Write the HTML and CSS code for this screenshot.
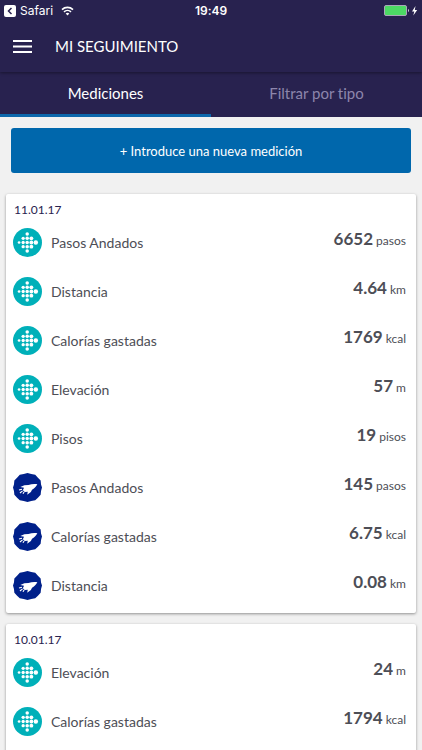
FILE: index.html
```
<!DOCTYPE html>
<html lang="es">
  <head>
    <meta charset="utf-8">
    <meta name="viewport" content="width=device-width, initial-scale=1">
    <title>Mi seguimiento</title>
    <link rel="stylesheet" href="styles.css">
  </head>
  <body>
    <!-- icons shared by the rows -->
    <svg class="hidden">
      <symbol id="fitbit" viewBox="0 0 30 30">
        <circle cx="15" cy="15" r="15" fill="#00b0b9"/>
        <g fill="#fff">
          <circle cx="6.3" cy="15" r="1.4"/>
          <circle cx="10.5" cy="10.7" r="1.7"/>
          <circle cx="10.5" cy="15" r="1.7"/>
          <circle cx="10.5" cy="19.3" r="1.7"/>
          <circle cx="14.7" cy="6.3" r="1.8"/>
          <circle cx="14.7" cy="10.7" r="1.8"/>
          <circle cx="14.7" cy="15" r="1.8"/>
          <circle cx="14.7" cy="19.3" r="1.8"/>
          <circle cx="14.7" cy="23.7" r="1.8"/>
          <circle cx="19" cy="10.7" r="2"/>
          <circle cx="19" cy="15" r="2"/>
          <circle cx="19" cy="19.3" r="2"/>
          <circle cx="23.6" cy="15" r="2.3"/>
        </g>
      </symbol>
      <symbol id="rocket" viewBox="0 0 30 30">
        <path fill="#00208a" d="M15 0l3.900 1.100 4.100.6 2.800 3.100 2.800 3 .4 4L30 15l-1 3.500-.4 4-2.800 3-2.800 2.800-4.100.6L15 30l-3.900-1.100-4.100-.6-2.800-2.800-2.800-3-.4-4L0 15l1-3.200.4-4 2.800-3L7 1.700l4.100-.6z"/>
        <path fill="#fff" d="M25.200 11.600c-3.200-.5-6.300-.2-9.200.9l-4.200.2-4.200 1.700 3.800.9-1.200 2.600 1.900 1.700 3.200-.3-.6 3.100 3.800-2.800 1.200-2.200c2.200-1.500 4.100-3.400 5.500-5.800z"/>
        <path d="M9.300 16.800l-3.100.8M9.900 18.500l-2.700 2.200M11.500 19.700l-1.200 1.800" stroke="#fff" stroke-width="1.200"/>
      </symbol>
    </svg>

    <div class="header">
      <div class="status-bar">
        <div class="status-left">
          <svg class="back-icon" viewBox="0 0 12 12">
            <rect width="12" height="12" rx="2" fill="#fff"/>
            <path d="M7.500 3L4.500 6l3 3" fill="none" stroke="#28224f" stroke-width="1.500"/>
          </svg>
          <span>Safari</span>
          <svg class="wifi-icon" viewBox="0 0 13 10">
            <path d="M1 3.600a8 8 0 0 1 11 0M3 5.900a5 5 0 0 1 7 0" fill="none" stroke="#fff" stroke-width="1.600"/>
            <path d="M4.700 7.500a2.600 2.600 0 0 1 3.600 0L6.500 9.500z" fill="#fff"/>
          </svg>
        </div>
        <div class="status-time">19:49</div>
        <div class="status-right">
          <svg class="battery-icon" viewBox="0 0 34 12">
            <rect x=".5" y=".5" width="22" height="10" rx="1.500" fill="#4cd964" stroke="#a9a7b9"/>
            <path d="M24 4c1.300.3 1.300 2.700 0 3z" fill="#d4d3dc"/>
            <path d="M31.500 1L28 6.500h2.300L29.300 10.500 33.200 5h-2.400z" fill="#fff"/>
          </svg>
        </div>
      </div>
      <div class="title-bar">
        <button class="menu-button" aria-label="Menú">
          <svg class="menu-icon" viewBox="0 0 19 13">
            <path d="M0 1h19M0 6.500h19M0 12h19" stroke="#fff" stroke-width="2"/>
          </svg>
        </button>
        <h1 class="title">MI SEGUIMIENTO</h1>
      </div>
    </div>

    <div class="tabs">
      <button class="tab active">Mediciones</button>
      <button class="tab">Filtrar por tipo</button>
    </div>

    <div class="main">
      <button class="add-button">+ Introduce una nueva medición</button>

      <div class="card">
        <div class="date">11.01.17</div>
        <div class="row">
          <svg class="row-icon"><use href="#fitbit"/></svg>
          <div class="row-name">Pasos Andados</div>
          <div class="row-value"><b>6652</b> pasos</div>
        </div>
        <div class="row">
          <svg class="row-icon"><use href="#fitbit"/></svg>
          <div class="row-name">Distancia</div>
          <div class="row-value"><b>4.64</b> km</div>
        </div>
        <div class="row">
          <svg class="row-icon"><use href="#fitbit"/></svg>
          <div class="row-name">Calorías gastadas</div>
          <div class="row-value"><b>1769</b> kcal</div>
        </div>
        <div class="row">
          <svg class="row-icon"><use href="#fitbit"/></svg>
          <div class="row-name">Elevación</div>
          <div class="row-value"><b>57</b> m</div>
        </div>
        <div class="row">
          <svg class="row-icon"><use href="#fitbit"/></svg>
          <div class="row-name">Pisos</div>
          <div class="row-value"><b>19</b> pisos</div>
        </div>
        <div class="row">
          <svg class="row-icon"><use href="#rocket"/></svg>
          <div class="row-name">Pasos Andados</div>
          <div class="row-value"><b>145</b> pasos</div>
        </div>
        <div class="row">
          <svg class="row-icon"><use href="#rocket"/></svg>
          <div class="row-name">Calorías gastadas</div>
          <div class="row-value"><b>6.75</b> kcal</div>
        </div>
        <div class="row">
          <svg class="row-icon"><use href="#rocket"/></svg>
          <div class="row-name">Distancia</div>
          <div class="row-value"><b>0.08</b> km</div>
        </div>
      </div>

      <div class="card">
        <div class="date">10.01.17</div>
        <div class="row">
          <svg class="row-icon"><use href="#fitbit"/></svg>
          <div class="row-name">Elevación</div>
          <div class="row-value"><b>24</b> m</div>
        </div>
        <div class="row">
          <svg class="row-icon"><use href="#fitbit"/></svg>
          <div class="row-name">Calorías gastadas</div>
          <div class="row-value"><b>1794</b> kcal</div>
        </div>
      </div>
    </div>
  </body>
</html>
```
FILE: styles.css
```
* {
  box-sizing: border-box;
}
body {
  margin: 0;
  height: 100vh;
  display: flex;
  flex-direction: column;
  background-color: #f1f1f1;
  color: #4d4e56;
  font-family: Lato, sans-serif;
  font-variant-ligatures: none;
}
button {
  border: 0;
  padding: 0;
  background: none;
  font-family: inherit;
  font-variant-ligatures: none;
  cursor: pointer;
}
.hidden {
  display: none;
}

/* header */
.header {
  background-color: #28224f;
  color: white;
  box-shadow: 0 1px 3px rgba(0, 0, 0, 0.4);
  z-index: 1;
}
.status-bar {
  display: grid;
  grid-template-columns: 1fr auto 1fr;
  align-items: center;
  height: 21px;
  padding: 0 4px;
  font-family: Inter, sans-serif;
  font-size: 12px;
}
.status-left {
  display: flex;
  align-items: center;
  gap: 4px;
}
.back-icon {
  width: 12px;
  height: 12px;
}
.wifi-icon {
  width: 13px;
  height: 10px;
  margin-left: 4px;
}
.status-time {
  font-weight: 600;
}
.status-right {
  display: flex;
  justify-content: flex-end;
}
.battery-icon {
  width: 34px;
  height: 12px;
}
.title-bar {
  display: flex;
  align-items: center;
  gap: 23px;
  height: 51px;
  padding: 0 13px 1px;
}
.menu-button {
  display: flex;
}
.menu-icon {
  width: 19px;
  height: 13px;
}
.title {
  margin: 0;
  font-size: 15px;
  font-weight: normal;
}

/* tabs */
.tabs {
  display: flex;
  flex-shrink: 0;
  height: 45px;
  background-color: #28224f;
}
.tab {
  flex: 1;
  border-bottom: 3px solid transparent;
  color: #8d86ac;
  font-size: 15px;
}
.tab.active {
  border-color: #0d68ac;
  color: white;
}

/* measurements */
.main {
  flex: 1;
  overflow-y: auto;
  scrollbar-width: none;
  padding: 11px 6px;
}
.add-button {
  display: block;
  width: calc(100% - 10px);
  height: 45px;
  margin: 0 5px 21px;
  border-radius: 3px;
  background-color: #0067ac;
  color: white;
  font-size: 13px;
}
.card {
  margin-bottom: 11px;
  padding: 7px 10px 3px 7px;
  border-radius: 2px;
  background-color: white;
  box-shadow: 0 1px 3px rgba(0, 0, 0, 0.4);
}
.card:last-child {
  padding-bottom: 24px;
}
.date {
  padding-left: 1px;
  color: #28224f;
  font-size: 12px;
  line-height: 17px;
}
.row {
  display: flex;
  align-items: center;
  height: 49px;
}
.row-icon {
  width: 29px;
  height: 29px;
}
.row-name {
  flex: 1;
  padding-left: 9px;
  font-size: 14px;
}
.row-value {
  padding-bottom: 8px;
  font-size: 12px;
}
.row-value b {
  font-size: 17px;
}
```
